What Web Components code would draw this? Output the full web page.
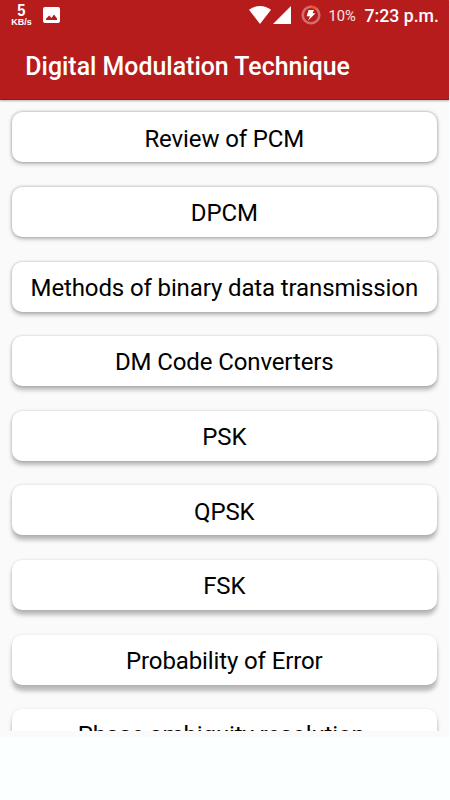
<!DOCTYPE html>
<html lang="en">
<head>
<meta charset="utf-8">
<title>Digital Modulation Technique</title>
<style>
html,body{margin:0;height:100%}
body{background:#fbffff;overflow:hidden;font-family:Roboto,sans-serif}
</style>
</head>
<body>
<topic-app></topic-app>
<script>
const attach = (el, html) => {
  const t = document.createElement('template');
  t.innerHTML = html;
  el.attachShadow({mode:'open'}).append(t.content.cloneNode(true));
};

class StatusBar extends HTMLElement {
  constructor(){ super(); attach(this, `
<style>
:host{display:flex;align-items:flex-start;height:32px;color:#fff;box-sizing:border-box;padding:0 10.5px 0 11px}
.net{display:flex;flex-direction:column;align-items:center;width:21px;padding-top:4px;font-family:"Liberation Sans",sans-serif;font-weight:700}
.net b{font-size:16px;line-height:14px;transform:scaleX(.92)}
.net span{font-size:9px;line-height:9px;white-space:nowrap}
svg{display:block;flex:none}
.pic{margin:7px 0 0 11px}
.wifi{margin:6px 0 0 auto}
.cell{margin:6px 0 0 2px}
.bat{margin:5px 0 0 10px}
.pct{font-size:14.700px;line-height:17px;margin:8px 0 0 8px;color:#f8e4e4;white-space:nowrap;width:28px}
.time{font-size:17.700px;line-height:20px;margin:6px 0 0 8px;font-weight:500;white-space:nowrap;width:74px}
</style>
<div class="net"><b>5</b><span>KB/s</span></div>
<svg class="pic" width="17" height="16" viewBox="0 0 17 16"><path fill="#fff" fill-rule="evenodd" d="M2 0h13a2 2 0 0 1 2 2v12a2 2 0 0 1-2 2H2a2 2 0 0 1-2-2V2a2 2 0 0 1 2-2zM3 13h11v-1.500l-3-4-2.500 3.500-2.300-2.500-3.200 3.200z"/></svg>
<svg class="wifi" width="22" height="18" viewBox="0 0 22 18"><path fill="#fff" d="M0 3.800Q5 0 11 0t11 3.800L11 18z"/></svg>
<svg class="cell" width="18" height="18" viewBox="0 0 18 18"><path fill="#fff" d="M18 0v18H0z"/></svg>
<svg class="bat" width="20" height="20" viewBox="0 0 20 20"><circle cx="10" cy="10" r="8.300" fill="none" stroke="#d36e6e" stroke-width="2.600"/><path d="M10 1.700a8.300 8.300 0 0 1 4.900 1.600" fill="none" stroke="#ff4b16" stroke-width="2.600"/><path fill="#fff" d="M7.600 5 13 5 11.500 8.300 14.500 8.300 7.200 15.600 8.900 11.200 5.600 11.200z"/></svg>
<span class="pct">10%</span><span class="time">7:23 p.m.</span>`); }
}
customElements.define('status-bar', StatusBar);

class AppBar extends HTMLElement {
  constructor(){ super(); attach(this, `
<style>
:host{display:flex;align-items:center;height:68px;box-sizing:border-box;padding:2px 0 0 25.300px;color:#fff;font-size:24.900px;font-weight:500;line-height:30px;white-space:nowrap}
</style><slot></slot>`); }
}
customElements.define('app-bar', AppBar);

class TopicCard extends HTMLElement {
  constructor(){ super(); attach(this, `
<style>
:host{display:flex;flex:none;align-items:center;justify-content:center;height:50px;box-sizing:border-box;padding-top:2.400px;background:#fff;border-radius:10px;color:#000;font-size:24px;letter-spacing:-.12px;line-height:30px;white-space:nowrap;
box-shadow:0 var(--drop,2px) 4px rgba(0,0,0,.26),0 0 3px rgba(0,0,0,var(--edge,.2))}
</style><slot></slot>`); }
}
customElements.define('topic-card', TopicCard);

class TopicList extends HTMLElement {
  constructor(){ super(); attach(this, `
<style>
:host{display:flex;flex-direction:column;gap:24.600px;height:631px;box-sizing:border-box;padding:12.400px 12.300px 0 11.900px;overflow:hidden}
</style><slot></slot>`); }
}
customElements.define('topic-list', TopicList);

class TopicApp extends HTMLElement {
  constructor(){ super();
    const topics = ['Review of PCM','DPCM','Methods of binary data transmission','DM Code Converters','PSK','QPSK','FSK','Probability of Error','Phase ambiguity resolution'];
    attach(this, `
<style>
:host{display:block;width:449px;height:737px;background:#fafafa}
header{height:100px;background:#b71c1c;box-shadow:inset 0 -1px #b00d0d,0 1px 2px rgba(0,0,0,.3);position:relative}
topic-card:last-child{padding-right:6px}
</style>
<header><status-bar></status-bar><app-bar>Digital Modulation Technique</app-bar></header>
<topic-list>${topics.map((t,i)=>`<topic-card style="--drop:${(1.4+i*.55).toFixed(2)}px;--edge:${(.26-i*.022).toFixed(3)}">${t}</topic-card>`).join('')}</topic-list>`); }
}
customElements.define('topic-app', TopicApp);
</script>
</body>
</html>
